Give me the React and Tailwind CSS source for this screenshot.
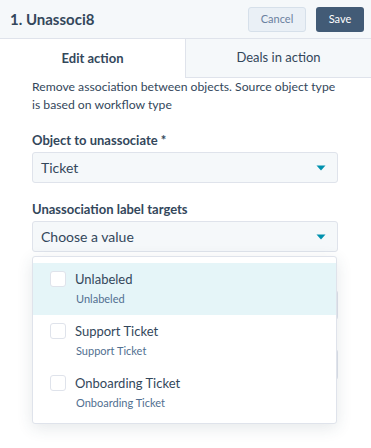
import { useState } from "react";

const options = [
  { label: "Unlabeled", sub: "Unlabeled" },
  { label: "Support Ticket", sub: "Support Ticket" },
  { label: "Onboarding Ticket", sub: "Onboarding Ticket" },
];

const Caret = () => (
  <svg width="10" height="6" viewBox="0 0 10 6" className="shrink-0">
    <path d="M0.5 0.5 L9.5 0.5 L5 5.5 Z" fill="#0091ae" />
  </svg>
);

const SelectBox = ({ value }) => (
  <div className="flex h-[31px] items-center justify-between rounded-[3px] border border-[#dfe3eb] bg-[#f5f8fa] pl-[8px] pr-[11px]">
    <span className="text-[14px] text-[#33475b]">{value}</span>
    <Caret />
  </div>
);

const App = () => {
  const [active, setActive] = useState(0);

  return (
    <div className="relative h-[448px] w-[371px] overflow-hidden bg-white font-['Lato',sans-serif] text-[#33475b]">
      {/* header */}
      <div className="flex h-[39px] items-center justify-between border-b border-[#dfe3eb] bg-[#f5f8fa] pl-[10px] pr-[7px]">
        <h1 className="text-[15px] font-bold text-[#33475b]">1. Unassoci8</h1>
        <div className="flex gap-[10px]">
          <button className="h-[25px] w-[58px] rounded-[3px] border border-[#d6e0ea] bg-[#eaf0f6] text-[11px] text-[#6a80a0]">
            Cancel
          </button>
          <button className="h-[25px] w-[48px] rounded-[3px] bg-[#425b76] text-[11px] text-white">
            Save
          </button>
        </div>
      </div>

      {/* tabs */}
      <div className="grid h-[39px] grid-cols-[185px_1fr]">
        <div className="flex items-center justify-center text-[13px] font-bold text-[#33475b]">
          Edit action
        </div>
        <div className="flex items-center justify-center border-b border-l border-[#dfe3eb] bg-[#f5f8fa] text-[13px] text-[#33475b]">
          Deals in action
        </div>
      </div>

      {/* form */}
      <div className="px-[32px] pr-[33px]">
        <p className="text-[12.2px] leading-[18px] text-[#33475b]">
          Remove association between objects. Source object type is based on
          workflow type
        </p>

        <label className="mt-[17px] mb-[3px] block text-[13px] font-bold leading-[18px]">
          Object to unassociate *
        </label>
        <SelectBox value="Ticket" />

        <label className="mt-[17px] mb-[3px] block text-[13px] font-bold leading-[18px]">
          Unassociation label targets
        </label>
        <SelectBox value="Choose a value" />

        <div className="mt-[38px] h-[30px] rounded-[3px] border border-[#dfe3eb] bg-[#f5f8fa]" />
        <div className="mt-[29px] h-[31px] rounded-[3px] border border-[#dfe3eb] bg-[#f5f8fa]" />
      </div>

      {/* dropdown menu */}
      <div className="absolute left-[32px] top-[256px] w-[305px] rounded-[3px] border border-[#dfe3eb] bg-white py-[6px] pb-[4px] shadow-[0_4px_16px_rgba(45,62,80,0.12)]">
        {options.map((o, i) => (
          <div
            key={o.label}
            onMouseEnter={() => setActive(i)}
            className={
              "flex h-[52px] items-start gap-[9px] pl-[17px] pt-[7px] " +
              (active === i ? "bg-[#e5f5f8]" : "bg-white")
            }
          >
            <span className="mt-[1px] h-[16px] w-[16px] shrink-0 rounded-[3px] border border-[#dfe3eb] bg-white" />
            <div className="flex flex-col">
              <span className="text-[13px] leading-[18px] text-[#33475b]">{o.label}</span>
              <span className="mt-[4px] pl-[1px] text-[11px] leading-[14px] text-[#516f90]">
                {o.sub}
              </span>
            </div>
          </div>
        ))}
      </div>
    </div>
  );
};

export default App;
